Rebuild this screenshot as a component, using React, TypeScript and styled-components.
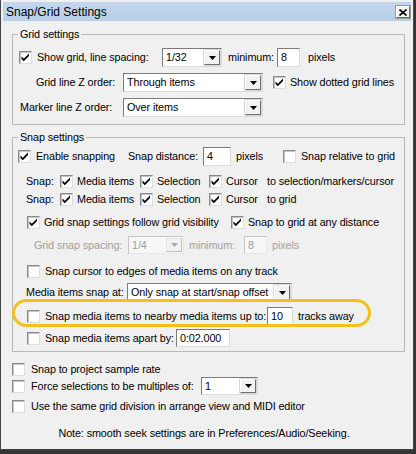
import React from "react";
import styled, { createGlobalStyle } from "styled-components";

const Global = createGlobalStyle`
  html, body { margin: 0; padding: 0; background: #343434; }
  body {
    font-family: "Liberation Sans", Arial, sans-serif;
    font-size: 10.8px;
    letter-spacing: -0.1px;
    color: #000;
  }
  #root { width: 416px; height: 454px; overflow: hidden; }
`;

const Window = styled.div`
  box-sizing: border-box;
  width: 414px;
  height: 450px;
  background: #f0f0f0;
  border: 1px solid #454545;
  border-top: none;
  padding: 2px 2px 0 2px;
  display: flex;
  flex-direction: column;
`;

const TitleBar = styled.div`
  flex: none;
  height: 19px;
  background: linear-gradient(#c3d8ee, #b8cfe8);
  display: flex;
  align-items: center;
  justify-content: space-between;
  padding: 0 1px 0 3px;
  font-size: 12px;
  letter-spacing: 0;
`;

const CloseButton = styled.div`
  box-sizing: border-box;
  width: 14px;
  height: 12px;
  margin-top: 1px;
  background: #f4f4f4;
  border: 1px solid;
  border-color: #ffffff #6a6a6a #6a6a6a #ffffff;
  box-shadow: 0 0 0 1px #9a9a9a;
  display: flex;
  align-items: center;
  justify-content: center;
`;

const Content = styled.div`
  display: flex;
  flex-direction: column;
  padding: 0 6px 0 9px;
`;

const Group = styled.fieldset<{ $mt: number; $pb: number }>`
  margin: ${(p) => p.$mt}px 0 0 0;
  padding: 0 0 ${(p) => p.$pb}px 0;
  border: 1px solid #b9b9b9;
  min-width: 0;
`;

const Legend = styled.legend`
  margin-left: 5px;
  padding: 0 2px;
  line-height: 13px;
`;

const Row = styled.div<{ $mt?: number; $h: number; $pl?: number; $disabled?: boolean }>`
  display: flex;
  align-items: center;
  height: ${(p) => p.$h}px;
  margin-top: ${(p) => p.$mt ?? 0}px;
  padding-left: ${(p) => p.$pl ?? 0}px;
  white-space: nowrap;
  color: ${(p) => (p.$disabled ? "#a0a0a0" : "#000")};
`;

const HighlightRow = styled(Row)`
  position: relative;
`;

const Text = styled.span<{ $w?: number; $ml?: number }>`
  flex: none;
  display: inline-block;
  line-height: 13px;
  width: ${(p) => (p.$w ? `${p.$w}px` : "auto")};
  margin-left: ${(p) => p.$ml ?? 0}px;
`;

const CheckItem = styled.label<{ $w?: number; $gap?: number }>`
  flex: none;
  display: flex;
  align-items: center;
  gap: ${(p) => p.$gap ?? 5}px;
  width: ${(p) => (p.$w ? `${p.$w}px` : "auto")};
  line-height: 13px;
`;

const Box = styled.span<{ $ml?: number }>`
  box-sizing: border-box;
  flex: none;
  width: 13px;
  height: 13px;
  margin-left: ${(p) => p.$ml ?? 0}px;
  background: #fff;
  border: 1px solid;
  border-color: #8a8a8a #dedede #dedede #8a8a8a;
  box-shadow: inset 1px 1px 0 #c4c4c4;
  display: flex;
  align-items: center;
  justify-content: center;
`;

const Field = styled.div<{ $w: number; $ml?: number; $disabled?: boolean }>`
  box-sizing: border-box;
  flex: none;
  width: ${(p) => p.$w}px;
  height: 100%;
  margin-left: ${(p) => p.$ml ?? 0}px;
  background: ${(p) => (p.$disabled ? "#f7f7f7" : "#fff")};
  border: 1px solid;
  border-color: ${(p) =>
    p.$disabled ? "#c6c6c6 #e6e6e6 #e6e6e6 #c6c6c6" : "#7c7c7c #dcdcdc #dcdcdc #7c7c7c"};
  color: ${(p) => (p.$disabled ? "#a0a0a0" : "#000")};
  display: flex;
  align-items: center;
`;

const FieldValue = styled.span`
  flex: 1;
  padding-left: 3px;
  line-height: 13px;
  overflow: hidden;
`;

const ArrowButton = styled.span<{ $disabled?: boolean }>`
  box-sizing: border-box;
  flex: none;
  width: 16px;
  height: calc(100% - 2px);
  margin-right: 1px;
  background: #f2f2f2;
  border: 1px solid;
  border-color: ${(p) => (p.$disabled ? "#e4e4e4 #bdbdbd #bdbdbd #e4e4e4" : "#ffffff #6f6f6f #6f6f6f #ffffff")};
  box-shadow: ${(p) => (p.$disabled ? "none" : "0 0 0 0.5px #b0b0b0")};
  display: flex;
  align-items: center;
  justify-content: center;
`;

const Highlight = styled.div`
  position: absolute;
  left: -1px;
  top: -8px;
  width: 359px;
  height: 28px;
  box-sizing: border-box;
  border: 3px solid #f3c01c;
  border-radius: 15px / 14px;
  pointer-events: none;
`;

const Note = styled.div`
  margin-top: 12px;
  height: 14px;
  line-height: 14px;
  text-align: center;
  padding-right: 9px;
`;

function Check({ on, ml }: { on?: boolean; ml?: number }) {
  return (
    <Box $ml={ml}>
      {on && (
        <svg width="11" height="11" viewBox="0 0 11 11">
          <polygon points="1.5,4.5 3.8,6.8 9,1.6 9,4 3.8,9.2 1.5,6.9" fill="#000" />
        </svg>
      )}
    </Box>
  );
}

function Opt({ label, on, w, gap }: { label: string; on?: boolean; w?: number; gap?: number }) {
  return (
    <CheckItem $w={w} $gap={gap}>
      <Check on={on} />
      <span>{label}</span>
    </CheckItem>
  );
}

function Select({ value, w, ml, disabled }: { value: string; w: number; ml?: number; disabled?: boolean }) {
  return (
    <Field $w={w} $ml={ml} $disabled={disabled}>
      <FieldValue>{value}</FieldValue>
      <ArrowButton $disabled={disabled}>
        <svg width="7" height="4" viewBox="0 0 7 4">
          <polygon points="0,0 7,0 3.5,4" fill={disabled ? "#a8a8a8" : "#000"} />
        </svg>
      </ArrowButton>
    </Field>
  );
}

function Input({ value, w, ml, disabled }: { value: string; w: number; ml?: number; disabled?: boolean }) {
  return (
    <Field $w={w} $ml={ml} $disabled={disabled}>
      <FieldValue>{value}</FieldValue>
    </Field>
  );
}

export default function App() {
  return (
    <>
      <Global />
      <Window>
        <TitleBar>
          <span>Snap/Grid Settings</span>
          <CloseButton>
            <svg width="8" height="7" viewBox="0 0 8 7">
              <path d="M0.5 0.5 L7.5 6.5 M7.5 0.5 L0.5 6.5" stroke="#000" strokeWidth="1.6" />
            </svg>
          </CloseButton>
        </TitleBar>
        <Content>
          <Group $mt={7} $pb={7}>
            <Legend>Grid settings</Legend>
            <Row $mt={7} $h={19} $pl={6}>
              <Opt label="Show grid, line spacing:" on w={143} />
              <Select value="1/32" w={60} />
              <Text $ml={6} $w={49}>minimum:</Text>
              <Input value="8" w={23} />
              <Text $ml={8}>pixels</Text>
            </Row>
            <Row $mt={6} $h={19} $pl={23}>
              <Text $w={87}>Grid line Z order:</Text>
              <Select value="Through items" w={140} />
              <Check on ml={10} />
              <Text $ml={4}>Show dotted grid lines</Text>
            </Row>
            <Row $mt={6} $h={19} $pl={7}>
              <Text $w={103}>Marker line Z order:</Text>
              <Select value="Over items" w={140} />
            </Row>
          </Group>

          <Group $mt={6} $pb={4}>
            <Legend>Snap settings</Legend>
            <Row $mt={3} $h={19} $pl={5}>
              <Opt label="Enable snapping" on w={110} />
              <Text $w={75}>Snap distance:</Text>
              <Input value="4" w={28} />
              <Text $ml={5} $w={47}>pixels</Text>
              <Opt label="Snap relative to grid" />
            </Row>
            <Row $mt={7} $h={16} $pl={13}>
              <Text $w={34}>Snap:</Text>
              <Opt label="Media items" on w={80} gap={4} />
              <Opt label="Selection" on w={69} gap={4} />
              <Opt label="Cursor" on w={58} gap={4} />
              <Text>to selection/markers/cursor</Text>
            </Row>
            <Row $mt={2} $h={16} $pl={13}>
              <Text $w={34}>Snap:</Text>
              <Opt label="Media items" on w={80} gap={4} />
              <Opt label="Selection" on w={69} gap={4} />
              <Opt label="Cursor" on w={58} gap={4} />
              <Text>to grid</Text>
            </Row>
            <Row $mt={7} $h={16} $pl={14}>
              <Opt label="Grid snap settings follow grid visibility" on w={204} gap={4} />
              <Opt label="Snap to grid at any distance" on gap={4} />
            </Row>
            <Row $mt={6} $h={18} $pl={21} $disabled>
              <Text $w={94}>Grid snap spacing:</Text>
              <Select value="1/4" w={56} disabled />
              <Text $ml={5} $w={55}>minimum:</Text>
              <Input value="8" w={23} disabled />
              <Text $ml={5}>pixels</Text>
            </Row>
            <Row $mt={9} $h={16} $pl={14}>
              <Opt label="Snap cursor to edges of media items on any track" />
            </Row>
            <Row $mt={4} $h={19} $pl={13}>
              <Text $w={101}>Media items snap at:</Text>
              <Select value="Only snap at start/snap offset" w={165} />
            </Row>
            <HighlightRow $mt={5} $h={19} $pl={14}>
              <Opt label="Snap media items to nearby media items up to:" w={240} />
              <Input value="10" w={26} />
              <Text $ml={5}>tracks away</Text>
              <Highlight />
            </HighlightRow>
            <Row $mt={3} $h={18} $pl={14}>
              <Opt label="Snap media items apart by:" w={149} />
              <Input value="0:02.000" w={54} />
            </Row>
          </Group>

          <Row $mt={9} $h={16}>
            <Opt label="Snap to project sample rate" gap={6} />
          </Row>
          <Row $h={18}>
            <Opt label="Force selections to be multiples of:" w={189} gap={6} />
            <Select value="1" w={57} />
          </Row>
          <Row $mt={3} $h={16}>
            <Opt label="Use the same grid division in arrange view and MIDI editor" gap={6} />
          </Row>
          <Note>Note: smooth seek settings are in Preferences/Audio/Seeking.</Note>
        </Content>
      </Window>
    </>
  );
}
